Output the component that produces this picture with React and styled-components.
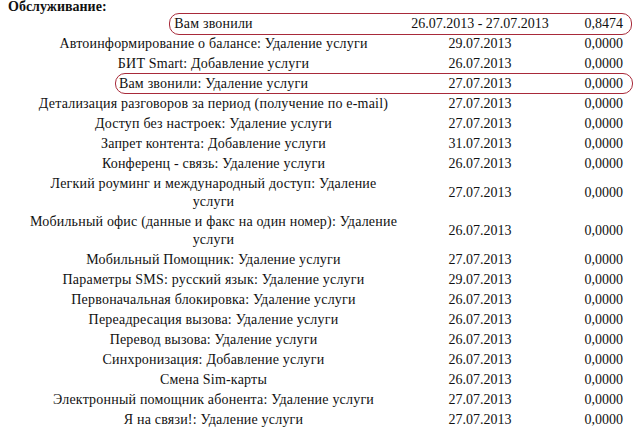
import React from "react";
import styled, { createGlobalStyle } from "styled-components";

const Global = createGlobalStyle`
  html, body { margin: 0; padding: 0; background: #fff; }
  body { font-family: "Liberation Serif", "Times New Roman", serif; color: #111; }
`;

const Page = styled.div`
  position: relative;
  width: 640px;
  height: 433px;
  overflow: hidden;
`;

const Title = styled.div`
  font-weight: bold;
  font-size: 14px;
  line-height: 14px;
  height: 14px;
  padding-left: 8px;
`;

const Table = styled.table`
  margin-left: 21px;
  border-collapse: collapse;
  table-layout: fixed;
  width: 619px;
  font-size: 14px;
  line-height: 18px;
`;

const Col = styled.col`
  width: ${(p) => p.$w}px;
`;

const NameCell = styled.td`
  padding: 1px 0;
  text-align: center;
  vertical-align: middle;
  white-space: pre-line;
  letter-spacing: 0.2px;
`;

const DateCell = styled.td`
  padding: 1px 0;
  text-align: center;
  vertical-align: middle;
  white-space: nowrap;
`;

const SumCell = styled.td`
  padding: 1px 17px 1px 0;
  text-align: right;
  vertical-align: middle;
  white-space: nowrap;
`;

/* hand-drawn highlight annotations laid over the table */
const Oval = styled.div`
  position: absolute;
  left: ${(p) => p.$x}px;
  top: ${(p) => p.$y}px;
  width: ${(p) => p.$w}px;
  height: ${(p) => p.$h}px;
  border: 1.5px solid #a82a3a;
  border-radius: 10px;
  pointer-events: none;
`;

const rows = [
  ["Вам звонили", "26.07.2013 - 27.07.2013", "0,8474"],
  ["Автоинформирование о балансе: Удаление услуги", "29.07.2013", "0,0000"],
  ["БИТ Smart: Добавление услуги", "26.07.2013", "0,0000"],
  ["Вам звонили: Удаление услуги", "27.07.2013", "0,0000"],
  ["Детализация разговоров за период (получение по e-mail)", "27.07.2013", "0,0000"],
  ["Доступ без настроек: Удаление услуги", "27.07.2013", "0,0000"],
  ["Запрет контента: Добавление услуги", "31.07.2013", "0,0000"],
  ["Конференц - связь: Удаление услуги", "26.07.2013", "0,0000"],
  ["Легкий роуминг и международный доступ: Удаление\nуслуги", "27.07.2013", "0,0000"],
  ["Мобильный офис (данные и факс на один номер): Удаление\nуслуги", "26.07.2013", "0,0000"],
  ["Мобильный Помощник: Удаление услуги", "27.07.2013", "0,0000"],
  ["Параметры SMS: русский язык: Удаление услуги", "29.07.2013", "0,0000"],
  ["Первоначальная блокировка: Удаление услуги", "26.07.2013", "0,0000"],
  ["Переадресация вызова: Удаление услуги", "26.07.2013", "0,0000"],
  ["Перевод вызова: Удаление услуги", "26.07.2013", "0,0000"],
  ["Синхронизация: Добавление услуги", "26.07.2013", "0,0000"],
  ["Смена Sim-карты", "26.07.2013", "0,0000"],
  ["Электронный помощник абонента: Удаление услуги", "27.07.2013", "0,0000"],
  ["Я на связи!: Удаление услуги", "27.07.2013", "0,0000"],
];

export default function App() {
  return (
    <Page>
      <Global />
      <Title>Обслуживание:</Title>
      <Table>
        <colgroup>
          <Col $w={385} />
          <Col $w={148} />
          <Col $w={86} />
        </colgroup>
        <tbody>
          {rows.map((r, i) => (
            <tr key={i}>
              <NameCell>{r[0]}</NameCell>
              <DateCell>{r[1]}</DateCell>
              <SumCell>{r[2]}</SumCell>
            </tr>
          ))}
        </tbody>
      </Table>
      <Oval $x={169} $y={13} $w={461} $h={20} />
      <Oval $x={115} $y={73} $w={516} $h={19} />
    </Page>
  );
}
